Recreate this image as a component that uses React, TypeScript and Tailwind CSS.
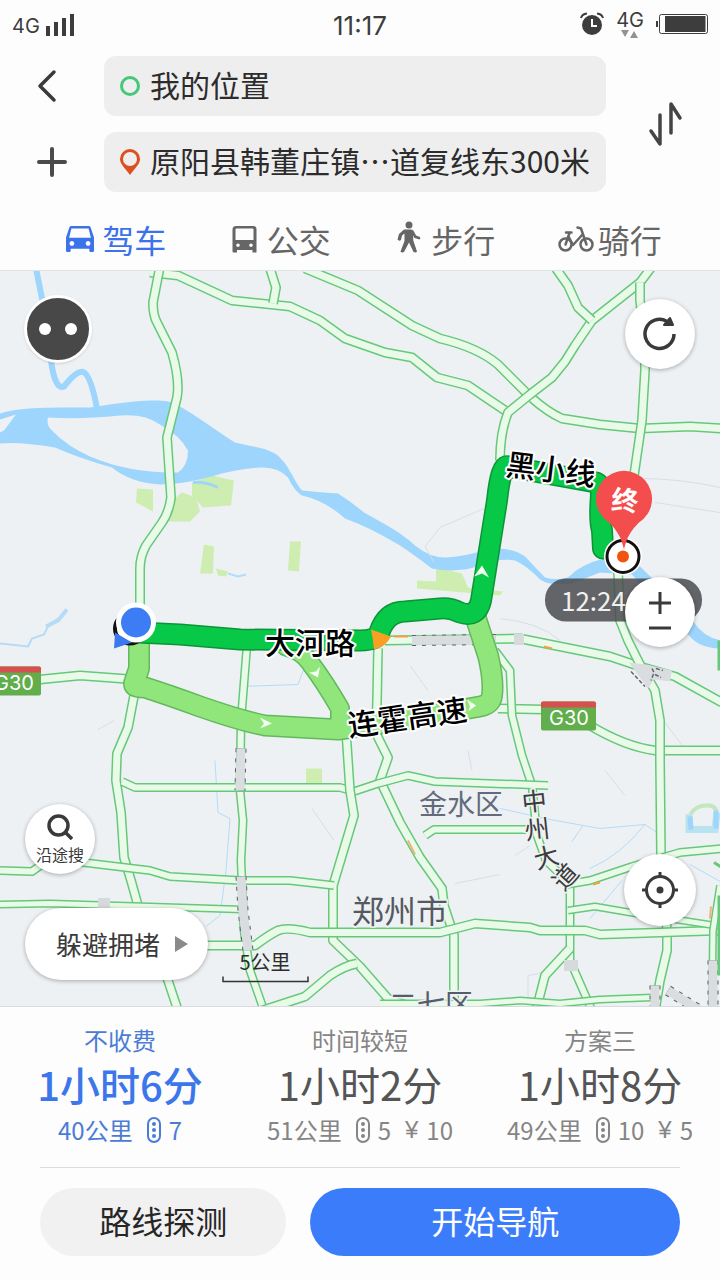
import type { ReactNode } from "react";

const ROADS: { d: string; w?: number }[] = [
  { d: "M0 682 L40 679 L80 675 L134 679" },
  { d: "M150 272 L178 275 L232 300 L290 306 L320 320 L345 338 L385 352 L412 357 L437 377 L468 385 L508 412" },
  { d: "M270 268 L276 287 L273 303" },
  { d: "M305 268 L358 290 L412 325 L440 338 Q478 347 498 364 L530 396 Q548 412 562 418 L600 424 L640 428 L690 426 L722 428" },
  { d: "M652 266 L640 282 L592 320 L575 345 L565 361 L552 377 L530 394 L508 412 Q500 432 500 460" },
  { d: "M556 268 L568 285 L578 307 L592 320" },
  { d: "M640 282 L640 300 L645 340 L645 370 L642 420 L634 475" },
  { d: "M385 640 L520 638 L560 646 L610 656 L640 666 L675 676 L722 702", w: 8 },
  { d: "M498 708 L545 709 L590 725 Q625 746 655 750 L722 750", w: 8 },
  { d: "M618 570 L620 620 L628 640 L640 664 L655 690 L660 720 L660 760 L661 855 L667 930 L667 950 L660 980 L655 1010" },
  { d: "M160 266 L153 302 Q153 315 157 322 L172 352 Q180 380 177 397 L167 437 L171 497 Q169 512 162 522 L146 545 Q140 556 140 568 L140 620" },
  { d: "M136 685 L128 727 L117 753 L116 780 L121 812 L124 857 L131 880 L140 912 L168 980 L178 1010" },
  { d: "M247 645 L241 720 L240 790 L243 820 L241 860 L244 930 L250 970 L264 1010", w: 7 },
  { d: "M378 648 L377 700 L376 733 L388 757 L380 780 L400 822 L420 857 L442 888 L444 905 L454 935 L454 1010" },
  { d: "M495 650 L510 670 L512 715 L522 755 L532 785 L537 835 L546 860 L570 883 L570 960 L592 1010", w: 7 },
  { d: "M122 781 L135 787 L340 787 L354 791 L378 783 L408 775 L435 781 L548 785", w: 7 },
  { d: "M425 835 L434 829 L526 829", w: 7 },
  { d: "M346 730 L350 790 L354 815 L345 845 L333 885 L333 940 L360 966 L388 998 L420 1010", w: 8 },
  { d: "M0 870 L32 871 L50 858 L92 863 L150 870 L170 876 L240 880 L290 880 L334 885", w: 7 },
  { d: "M0 904 L50 903 L150 906 L242 909", w: 6 },
  { d: "M200 945 L255 945 Q268 935 278 930 Q288 926 310 932 L440 932 L475 923 L530 927 L540 930 L585 930 L600 934 L722 930", w: 8 },
  { d: "M357 963 Q345 965 330 975 L305 996 L262 1010", w: 8 },
  { d: "M566 884 L590 880 L632 866 L680 852 L722 848", w: 7 },
  { d: "M568 910 L595 906 L630 912 L722 926", w: 6 },
  { d: "M570 948 L545 975 L536 1010", w: 8 },
  { d: "M380 1003 L480 1003 L520 1000 L560 1003 L600 999 L652 997", w: 6 },
  { d: "M720 885 L713 930 L712 1010", w: 6 },
];

const TUNNELS = ["M412 640 L496 639", "M241 748 L240 790", "M241 876 L243 910 L248 950", "M655 985 L655 1010", "M668 990 L700 1010", "M713 960 L713 1010"];

function MapLabel({ x, y, r = 0, children }: { x: number; y: number; r?: number; children: string }) {
  return (
    <text
      x={x}
      y={y}
      transform={`rotate(${r} ${x} ${y})`}
      textAnchor="middle"
      dominantBaseline="central"
      className="fill-black stroke-white text-[30px] font-medium [paint-order:stroke] [stroke-linejoin:round] [stroke-width:4px]"
    >
      {children}
    </text>
  );
}

function RouteMap() {
  const lightRoute =
    "M139 640 L139 668 L134 683 Q134 687 145 687 Q170 695 200 706 Q240 720 265 725 L338 729 L400 720 L480 706 Q491 704 492 695 Q494 680 488 655 L474 612";
  const lightBranch = "M286 646 Q302 650 310 662 Q325 682 340 708 L340 726";
  const mainRoute =
    "M138 632 L180 634 L240 639 L360 640 Q376 640 379 633 Q386 611 405 611 L440 608 Q450 607 460 612 Q477 618 481 600 L497 500 Q501 463 508 466 L596 482 Q601 484 601 495 Q599 520 602 530 L603 548";
  return (
    <svg
      viewBox="0 270 720 736"
      preserveAspectRatio="xMidYMid slice"
      className="absolute inset-0 h-full w-full"
      role="img"
      aria-label="路线地图"
    >
      <rect x="-500" y="-500" width="1720" height="2200" fill="#edf1f4" />
      {/* parks */}
      <g fill="#cdeeb0">
        <path d="M137 488 L153 489 L153 511 L136 502Z" />
        <path d="M192 482 L212 475 L234 480 L231 505 L203 507 L192 495Z" />
        <path d="M166 505 L182 492 L196 497 L200 511 L190 521 L168 521Z" />
        <path d="M204 544 L214 546 L213 573 L200 573Z" />
        <path d="M290 541 L301 541 L299 571 L288 570Z" />
        <path d="M216 568 L228 571 L226 576 L218 575Z" />
        <path d="M436 567 L462 573 L468 587 L503 591 L500 595 L417 588 L417 580 L436 581Z" />
        <path d="M306 768 L322 768 L322 783 L306 783Z" />
      </g>
      {/* water */}
      <path
        fill="#9dd5fc"
        fillRule="evenodd"
        d="M0 413 C20 407 40 407 90 407 L110 404 C140 400 155 399 168 401 C185 406 205 423 235 442 C250 446 262 446 275 453 C290 464 293 480 302 490 Q320 492 338 493 Q352 502 364 512 C385 524 400 531 415 545 Q430 557 445 557 C465 556 475 552 490 549 Q510 546 525 556 L545 577 Q555 580 568 577 Q580 564 604 558 L640 566 L665 590 L694 622 Q705 638 722 640 L722 648 Q700 648 690 636 L655 600 L632 574 L600 572 L572 583 Q550 586 540 579 Q528 566 515 560 Q500 557 480 565 Q458 573 432 568 Q415 555 400 545 Q370 527 345 518 Q325 500 302 495 Q294 490 288 477 Q278 466 260 467 Q235 469 215 475 Q185 484 160 484 Q130 482 112 467 Q80 458 55 447 Q20 441 0 443Z M48 417 Q46 425 52 430 Q66 445 90 456 Q130 473 178 472 Q188 465 188 450 Q180 435 160 424 Q145 413 120 415 Q80 419 48 417Z M0 419 L16 414 L4 430 L0 432Z"
      />
      <path d="M36 268 L42 298 L51 360 Q55 390 64 386 Q78 368 84 372 Q91 376 97 408" fill="none" stroke="#9dd5fc" strokeWidth="6" />
      <path d="M193 482 Q205 481 218 487" fill="none" stroke="#9dd5fc" strokeWidth="3" />
      <g fill="none" stroke="#b4dcf8" strokeWidth="2">
        <path d="M0 643 L28 646 L32 638 L44 634 L48 626 L58 618" />
        <path d="M46 626 L58 620 L67 609" strokeWidth="4" />
        <path d="M228 573 L238 576 L246 574" />
        <path d="M500 808 L550 819 L600 828 L645 824 L660 834 M583 825 L572 841 M645 824 Q620 855 590 868 M622 880 L590 918 M690 864 L722 882" strokeWidth="1" />
        <path d="M240 686 L298 684 L304 668 M215 760 L218 812 L230 818 L226 870 L220 915 L206 926" strokeWidth="1" />
        <path d="M690 814 Q696 805 706 805 Q714 804 717 811" stroke="#c4e6c0" strokeWidth="4" />
        <path d="M689 814 L689 829 L715 829 L717 812" strokeWidth="7" stroke="#b9e3ee" />
        <path d="M690 816 L691 829 M716 810 L716 828" strokeWidth="5" stroke="#9dd5fc" />
      </g>
      <g fill="none" stroke="#d9dee5" strokeWidth="1">
        <path d="M425 546 L440 527 L484 508 M425 546 L434 562 M640 478 Q680 478 720 487 M655 502 L720 512 M500 618 Q540 622 560 640 M410 665 L428 690 M665 722 L690 755 M605 770 L625 795 M515 855 L530 845 M455 883 L500 874" />
        <path d="M98 729 L114 720 M312 808 L334 840 M468 750 L472 770 M528 1000 L528 975 L545 972" />
      </g>
      {/* roads */}
      <g fill="none" strokeLinejoin="round">
        {ROADS.map((r) => (
          <g key={r.d}>
            <path d={r.d} stroke="#66c87a" strokeWidth={(r.w ?? 8) + 2} />
            <path d={r.d} stroke="#e9fbe8" strokeWidth={(r.w ?? 8) - 1} />
          </g>
        ))}
        {TUNNELS.map((d) => (
          <g key={d}>
            <path d={d} stroke="#5c6066" strokeWidth="11" strokeDasharray="4 6" />
            <path d={d} stroke="#d9dde0" strokeWidth="9" />
          </g>
        ))}
        <path d="M98 903 L110 903 M514 639 L524 639 M564 965 L578 965" stroke="#d6dadd" strokeWidth="11" />
        <path d="M629 662 L646 664 L672 670 L670 681 L654 679 L648 688Z" fill="#d9dde0" />
        <path d="M631 671 L645 686 M652 668 L654 672 L651 680 M656 668 L663 670 M655 674 L661 677" stroke="#63676d" strokeWidth="1.500" strokeDasharray="4 2" />
        <path d="M408 840 L415 854 M711 906 L710 918" stroke="#f3b07a" strokeWidth="2" />
        <path d="M394 636 L408 636 M544 646 L552 648 M593 884 L600 882" stroke="#f3a04a" strokeWidth="2" />
        <path d="M719 640 L719 670 M714 862 L722 867 M719 895 L719 975" stroke="#66c87a" strokeWidth="3" />
      </g>
      {/* route options */}
      <g fill="none" strokeLinecap="round" strokeLinejoin="round">
        <path d={lightRoute} stroke="#62b95c" strokeWidth="22" />
        <path d={lightBranch} stroke="#62b95c" strokeWidth="20" />
        <path d={lightRoute} stroke="#91e67b" strokeWidth="19" />
        <path d={lightBranch} stroke="#91e67b" strokeWidth="17" />
        <path d={mainRoute} stroke="#0b9537" strokeWidth="22" />
        <path d={mainRoute} stroke="#08c847" strokeWidth="19" />
      </g>
      <path d="M371 629 L391 636 Q386 646 374 649 Q373 638 371 629Z" fill="#f8a021" />
      <g fill="#f4fff1">
        <path d="M482 565 L489 577 L482 573 L474 576Z" />
        <path d="M272 723 L260 717 L264 723 L260 728Z" />
        <path d="M318 677 L320 666 L316 671 L309 672Z" />
        <path d="M476 705 L467 699 L470 706 L468 711Z" />
      </g>
      {/* highway shields */}
      {[-10, 541].map((x) => (
        <g key={x}>
          <rect x={x} y={x < 0 ? 666 : 701} width={x < 0 ? 51 : 55} height="29" rx="2" fill="#62ad4c" />
          <path d={x < 0 ? "M-10 672 V666 H39 Q41 666 41 668 V672Z" : "M541 707 V703 Q541 701 543 701 H594 Q596 701 596 703 V707Z"} fill="#d5504f" />
          <text x={x < 0 ? 14 : 569} y={x < 0 ? 689 : 724} textAnchor="middle" className="fill-white font-['Inter',sans-serif] text-[20px]">
            G30
          </text>
        </g>
      ))}
      {/* labels */}
      <MapLabel x={310} y={640}>大河路</MapLabel>
      <MapLabel x={551} y={467} r={7}>黑小线</MapLabel>
      <MapLabel x={407} y={715} r={-8}>连霍高速</MapLabel>
      <g textAnchor="middle" className="stroke-[#edf1f4] [paint-order:stroke] [stroke-width:3px]">
        <text x="461" y="814" className="fill-[#626b7b] text-[28px]">金水区</text>
        <text x="400" y="922" className="fill-[#555961] text-[32px]">郑州市</text>
        <text x="431" y="1014" className="fill-[#555d6a] text-[28px]">二七区</text>
        {[
          { c: "中", x: 534, y: 799, r: -6 },
          { c: "州", x: 537, y: 827, r: -6 },
          { c: "大", x: 546, y: 855, r: -16 },
          { c: "道", x: 564, y: 875, r: -48 },
        ].map((l) => (
          <text key={l.c} x={l.x} y={l.y} dominantBaseline="central" transform={`rotate(${l.r} ${l.x} ${l.y})`} className="fill-[#3c3c3c] text-[25px]">
            {l.c}
          </text>
        ))}
      </g>
      {/* start marker */}
      <circle cx="130" cy="628" r="15" fill="#fff" stroke="#111" strokeWidth="4" />
      <circle cx="136" cy="622" r="20" fill="#fff" />
      <path d="M115 632 L114 648 L132 642Z" fill="#3a78f0" />
      <circle cx="136" cy="622" r="18" fill="#fff" />
      <circle cx="136" cy="622" r="15" fill="#3c7df6" />
      {/* arrival time */}
      <rect x="545" y="578" width="157" height="43" rx="21" fill="#4a4d4f" fillOpacity="0.86" />
      <text x="561" y="610" className="fill-[#f0f0f0] text-[26px]">12:24</text>
      {/* destination */}
      <circle cx="623" cy="556" r="19" fill="#fff" />
      <circle cx="623" cy="556" r="16" fill="#fff" stroke="#111" strokeWidth="3" />
      <circle cx="623" cy="556" r="6" fill="#f2530f" />
      <path d="M624 549 C621 536 617 530 609 522 A28 28 0 1 1 639 522 C631 530 627 536 624 549Z" fill="#f44d4d" />
      <text x="625" y="510" textAnchor="middle" transform="rotate(4 625 500)" className="fill-white text-[27px] font-bold">终</text>
      {/* scale */}
      <text x="265" y="969" textAnchor="middle" className="fill-[#2c2c2c] text-[20px]">5公里</text>
      <path d="M223 976 V981 H308 V976" fill="none" stroke="#333" strokeWidth="1.5" />
    </svg>
  );
}

function LightIcon() {
  return (
    <svg viewBox="0 0 14 26" className="h-[26px] w-[14px]" fill="none" stroke="currentColor" strokeWidth="2">
      <rect x="1" y="1" width="12" height="24" rx="6" />
      <g fill="currentColor" stroke="none">
        <circle cx="7" cy="7" r="2" />
        <circle cx="7" cy="13" r="2" />
        <circle cx="7" cy="19" r="2" />
      </g>
    </svg>
  );
}

const PLANS = [
  { label: "不收费", time: "1小时6分", km: "40公里", lights: 7, active: true },
  { label: "时间较短", time: "1小时2分", km: "51公里", lights: 5, toll: 10 },
  { label: "方案三", time: "1小时8分", km: "49公里", lights: 10, toll: 5 },
];

const MODES: { name: string; icon: ReactNode }[] = [
  {
    name: "驾车",
    icon: (
      <svg viewBox="3 5 18 16" className="h-[26px] w-7" preserveAspectRatio="none" fill="currentColor">
        <path d="M18.92 6.01C18.72 5.42 18.16 5 17.5 5h-11c-.66 0-1.21.42-1.42 1.01L3 12v8c0 .55.45 1 1 1h1c.55 0 1-.45 1-1v-1h12v1c0 .55.45 1 1 1h1c.55 0 1-.45 1-1v-8l-2.08-5.99zM6.800 17.200c-.83 0-1.500-.67-1.500-1.500S5.970 14.200 6.800 14.200s1.500.67 1.500 1.500-.67 1.500-1.500 1.500zm10.400 0c-.83 0-1.500-.67-1.500-1.500s.67-1.500 1.500-1.500 1.500.67 1.500 1.500-.67 1.500-1.500 1.500zM5 12.200l1.500-5.700h11L19 12.200H5z" />
      </svg>
    ),
  },
  {
    name: "公交",
    icon: (
      <svg viewBox="0 0 28 28" className="h-7 w-7" fill="currentColor" fillRule="evenodd">
        <path d="M5 1H22Q25.500 1 25.500 4.500V27Q25.500 27.500 24.500 27.500H21.500V25H6V27.500H2.500Q1.500 27.500 1.500 26.500V4.500Q1.500 1 5 1ZM5.500 3.500Q4.500 3.500 4.500 4.500V15H22.500V4.500Q22.500 3.500 21.500 3.500ZM7 18.500A1.800 1.800 0 1 0 7 22.100A1.800 1.800 0 1 0 7 18.500ZM20 18.500A1.800 1.800 0 1 0 20 22.100A1.800 1.800 0 1 0 20 18.500Z" />
      </svg>
    ),
  },
  {
    name: "步行",
    icon: (
      <svg viewBox="0 0 28 34" className="-mt-1 h-[34px] w-7" fill="currentColor">
        <circle cx="14" cy="5" r="3.500" />
        <path d="M9 9.500H16Q18 9.500 19 11.500L21 15.500L25 17Q26 18 24.500 19.500L19.500 18L18 15.500L18.300 20.500L22 31.500Q21 33 18.500 32L14 22.500L9 32Q6.500 33 5.500 31.500L9.500 21V13.500L7 15.500L6 20Q4 21.500 2.500 19.500L4 14Z" />
      </svg>
    ),
  },
  {
    name: "骑行",
    icon: (
      <svg viewBox="0 0 36 28" className="-mr-1 h-7 w-9" fill="none" stroke="currentColor" strokeWidth="2.500" strokeLinecap="round" strokeLinejoin="round">
        <circle cx="7.500" cy="19.500" r="6" />
        <circle cx="28.500" cy="19.500" r="6" />
        <path d="M7.500 19.500L11.500 8M8 7.500H13.500M10.500 11.500L15 20L24.500 9.500M28.500 19.500L23 3.500L19.500 2.500" />
      </svg>
    ),
  },
];

const round = "flex items-center justify-center rounded-full bg-white text-[#3a3a3a] shadow-[0_1px_4px_rgba(0,0,0,0.3)]";

export default function App() {
  return (
    <div
      lang="zh-CN"
      className="flex min-h-screen w-full flex-col bg-[#fdfdfd] font-['Noto_Sans_CJK_SC',sans-serif] text-[#333]"
    >
      <header className="border-b border-[#e3e3e5]">
        <div className="grid h-12 grid-cols-3 items-center px-3 font-['Inter','Noto_Sans_CJK_SC',sans-serif] text-[#3d3d3d]">
          <div className="flex items-center gap-1.5">
            <span className="pt-1 text-xl leading-6">4G</span>
            <svg viewBox="0 0 30 24" className="h-6 w-[30px]" fill="currentColor">
              <path d="M0 14H4V24H0ZM8 10H12V24H8ZM16 6H20V24H16ZM24 2H28V24H24Z" />
            </svg>
          </div>
          <div className="pt-1 text-center text-[26px] leading-8">11:17</div>
          <div className="flex items-center justify-end gap-3">
            <svg viewBox="0 0 24 24" className="h-6 w-6" fill="currentColor">
              <circle cx="12" cy="13" r="10" />
              <path d="M1 6Q2 2 7 1.500M23 6Q22 2 17 1.500" stroke="currentColor" strokeWidth="2" fill="none" />
              <path d="M12 7V14H17" stroke="#fdfdfd" strokeWidth="2" fill="none" />
            </svg>
            <div className="flex flex-col items-center">
              <span className="text-xl leading-5">4G</span>
              <svg viewBox="0 0 18 8" className="h-2 w-[18px]" fill="#929292">
                <path d="M0 0H8L4 7ZM9 8H17L13 1Z" />
              </svg>
            </div>
            <svg viewBox="0 0 52 20" className="h-5 w-[52px]" fill="none" stroke="currentColor">
              <rect x="3.500" y="0.500" width="48" height="19" rx="2" />
              <path d="M9 2H49.500V18H9Z" fill="currentColor" stroke="none" />
              <path d="M1 7V13" strokeWidth="2" />
            </svg>
          </div>
        </div>

        <div className="flex items-stretch pt-2">
          <div className="flex w-[104px] flex-col gap-4">
            <button type="button" aria-label="返回" className="flex h-[60px] items-center pl-9">
              <svg viewBox="0 0 22 34" className="h-[34px] w-[22px]" fill="none" stroke="#3a3a3a" strokeWidth="3.500" strokeLinecap="round" strokeLinejoin="round">
                <path d="M18 3L4 17L18 31" />
              </svg>
            </button>
            <button type="button" aria-label="添加途经点" className="flex h-[60px] items-center pl-9">
              <svg viewBox="0 0 32 32" className="h-8 w-8" fill="none" stroke="#4a4a4a" strokeWidth="4" strokeLinecap="round">
                <path d="M16 3V29M3 16H29" />
              </svg>
            </button>
          </div>
          <div className="flex min-w-0 flex-1 flex-col gap-4">
            <label className="flex h-[60px] items-center gap-2 rounded-xl bg-[#eeeeee] pl-4">
              <svg viewBox="0 0 22 22" className="h-[22px] w-[22px] shrink-0" fill="none" stroke="#45c878" strokeWidth="3">
                <circle cx="10" cy="11" r="8.500" />
              </svg>
              <input aria-label="起点" defaultValue="我的位置" className="mb-1 w-full min-w-0 bg-transparent text-[30px] leading-10 text-[#2c2c2c] outline-none" />
            </label>
            <label className="flex h-[60px] items-center gap-2 rounded-xl bg-[#eeeeee] pl-4">
              <svg viewBox="0 0 22 26" className="h-[26px] w-[22px] shrink-0">
                <path fillRule="evenodd" fill="#dc5020" d="M10 0A10 10 0 0 0 0 10C0 15 5 19 10 26C15 19 20 15 20 10A10 10 0 0 0 10 0ZM10 3A7 7 0 1 1 10 17A7 7 0 1 1 10 3Z" />
              </svg>
              <input aria-label="终点" defaultValue="原阳县韩董庄镇⋯道复线东300米" className="mb-1 w-full min-w-0 bg-transparent text-[30px] leading-10 text-[#2c2c2c] outline-none" />
            </label>
          </div>
          <button type="button" aria-label="交换起终点" className="flex w-[114px] items-center justify-center pl-1">
            <svg viewBox="0 0 36 46" className="h-[46px] w-9" fill="none" stroke="#444" strokeWidth="3.500" strokeLinecap="round" strokeLinejoin="round">
              <path d="M13 14V43L4 30M24 32V3L33 17" />
            </svg>
          </button>
        </div>

        <nav className="grid h-[78px] grid-cols-4 pr-7 pl-[34px] pt-4">
          {MODES.map((m, i) => (
            <button
              key={m.name}
              type="button"
              className={`flex items-center justify-center gap-2 text-[32px] leading-[44px] ${i === 0 ? "text-[#3c72ea]" : "text-[#666]"}`}
            >
              {m.icon}
              <span>{m.name}</span>
            </button>
          ))}
        </nav>
      </header>

      <main className="relative min-h-[600px] flex-1 overflow-hidden">
        <RouteMap />
        <button type="button" aria-label="语音助手" className="absolute top-6 left-6 flex h-[68px] w-[68px] items-center justify-center gap-3.5 rounded-full border-[3px] border-white bg-[#484848] shadow">
          <span className="h-3 w-3 rounded-full bg-white" />
          <span className="h-3 w-3 rounded-full bg-white" />
        </button>
        <button type="button" aria-label="刷新" className={`${round} absolute top-7 right-[25px] h-[70px] w-[70px]`}>
          <svg viewBox="0 0 36 36" className="h-9 w-9" fill="none" stroke="currentColor" strokeWidth="3.500">
            <path d="M32 18A14.500 14.500 0 1 1 25 5.500" />
            <path d="M28 2L31 9H22Z" fill="currentColor" strokeWidth="2" strokeLinejoin="round" />
          </svg>
        </button>
        <div className={`${round} absolute top-[306px] right-[25px] h-[70px] w-[70px] flex-col`}>
          <button type="button" aria-label="放大" className="flex h-8 w-full items-end justify-center">
            <svg viewBox="0 0 22 22" className="h-[22px] w-[22px]" fill="none" stroke="currentColor" strokeWidth="3">
              <path d="M11 0V22M0 11H22" />
            </svg>
          </button>
          <button type="button" aria-label="缩小" className="flex h-7 w-full items-center justify-center">
            <svg viewBox="0 0 22 4" className="h-1 w-[22px]" fill="none" stroke="currentColor" strokeWidth="3">
              <path d="M0 2H22" />
            </svg>
          </button>
        </div>
        <button type="button" aria-label="定位" className={`${round} absolute right-6 bottom-20 h-[72px] w-[72px]`}>
          <svg viewBox="0 0 36 36" className="h-9 w-9" fill="none" stroke="currentColor" strokeWidth="3">
            <circle cx="18" cy="18" r="13.500" />
            <path d="M18 0V6M18 30V36M0 18H6M30 18H36" />
            <circle cx="18" cy="18" r="3.500" fill="currentColor" stroke="none" />
          </svg>
        </button>
        <button type="button" className={`${round} absolute bottom-[132px] left-[25px] h-[70px] w-[70px] flex-col gap-1`}>
          <svg viewBox="0 0 26 26" className="h-[26px] w-[26px]" fill="none" stroke="currentColor" strokeWidth="3.500">
            <circle cx="11.500" cy="11.500" r="9.500" />
            <path d="M18 18L25 25" />
          </svg>
          <span className="text-base leading-5">沿途搜</span>
        </button>
        <button type="button" className={`${round} absolute bottom-[26px] left-[25px] h-[72px] gap-3.5 pr-5 pl-[31px] text-[26px] leading-9`}>
          <span>躲避拥堵</span>
          <svg viewBox="0 0 14 16" className="h-4 w-3.5" fill="#8a8a8a">
            <path d="M1 0L14 8L1 16Z" />
          </svg>
        </button>
      </main>

      <footer className="border-t border-[#d8dcde] pb-6">
        <div className="grid grid-cols-3 pt-4">
          {PLANS.map((p) => (
            <button
              key={p.label}
              type="button"
              className={`flex flex-col items-center whitespace-nowrap ${p.active ? "text-[#4a7cd6]" : "text-[#858585]"}`}
            >
              <span className="text-2xl leading-[34px]">{p.label}</span>
              <span className={`text-[40px] leading-[54px] ${p.active ? "font-medium text-[#3b76ea]" : "text-[#555]"}`}>{p.time}</span>
              <span className="flex items-center text-2xl leading-[38px]">
                {p.km}
                <span className="ml-3.5 flex items-center gap-2">
                  <LightIcon />
                  {p.lights}
                </span>
                {p.toll !== undefined && (
                  <span className="ml-3.5 flex items-center gap-2">
                    <span className="font-['Liberation_Sans',sans-serif]">¥</span>
                    {p.toll}
                  </span>
                )}
              </span>
            </button>
          ))}
        </div>
        <div className="mx-10 mt-[18px] flex gap-6 border-t border-[#dcdcdc] pt-5 text-[32px]">
          <button type="button" className="h-[68px] flex-[2] rounded-full bg-[#f1f1f1] pb-1 text-[#262626]">路线探测</button>
          <button type="button" className="h-[68px] flex-[3] rounded-full bg-[#3b7cfa] pb-1 text-white">开始导航</button>
        </div>
      </footer>
    </div>
  );
}
